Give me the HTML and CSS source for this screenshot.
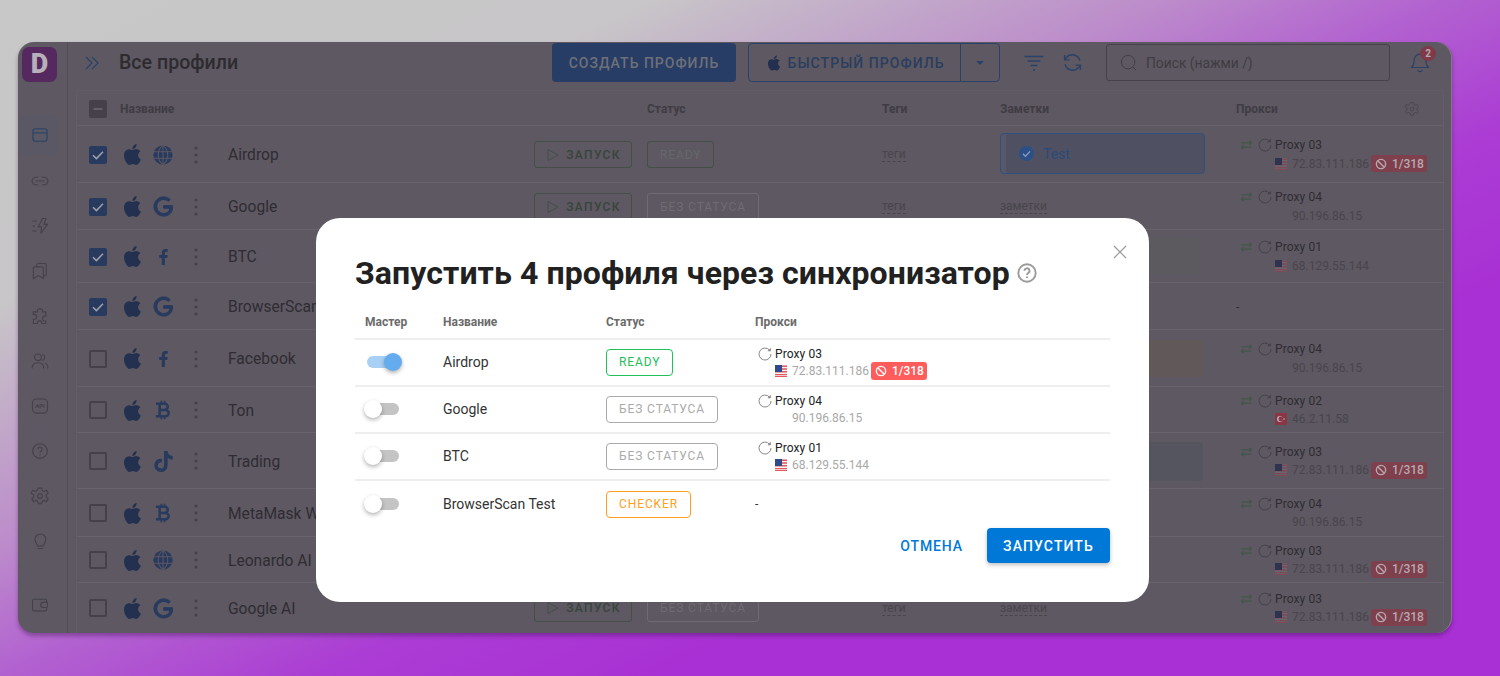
FILE: index.html
```html
<!DOCTYPE html>
<html lang="ru">
<head>
<meta charset="utf-8">
<title>Все профили</title>
<link rel="stylesheet" href="styles.css">
</head>
<body>
<svg class="defs" aria-hidden="true">
  <symbol id="apple" viewBox="0 0 24 24"><path d="M18.71,19.5C17.88,20.74 17,21.95 15.66,21.97C14.32,22 13.89,21.18 12.37,21.18C10.84,21.18 10.37,21.95 9.1,22C7.79,22.05 6.8,20.68 5.96,19.47C4.25,17 2.94,12.45 4.7,9.39C5.57,7.87 7.13,6.91 8.82,6.88C10.1,6.86 11.32,7.75 12.11,7.75C12.89,7.75 14.37,6.68 15.92,6.84C16.57,6.87 18.39,7.1 19.56,8.82C19.47,8.88 17.39,10.1 17.41,12.63C17.44,15.65 20.06,16.66 20.09,16.67C20.06,16.74 19.67,18.11 18.71,19.5M13,3.5C13.73,2.67 14.94,2.04 15.94,2C16.07,3.17 15.6,4.35 14.9,5.19C14.21,6.04 13.07,6.7 11.95,6.61C11.8,5.46 12.36,4.26 13,3.5Z"/></symbol>
  <symbol id="google" viewBox="0 0 24 24"><path d="M21.35,11.1H12.18V13.83H18.69C18.36,17.64 15.19,19.27 12.19,19.27C8.36,19.27 5,16.25 5,12C5,7.9 8.2,4.73 12.2,4.73C15.29,4.73 17.1,6.7 17.1,6.7L19,4.72C19,4.72 16.56,2 12.1,2C6.42,2 2.03,6.8 2.03,12C2.03,17.05 6.16,22 12.25,22C17.6,22 21.5,18.33 21.5,12.91C21.5,11.76 21.35,11.1 21.35,11.1V11.1Z" stroke="currentColor" stroke-width="1"/></symbol>
  <symbol id="globe" viewBox="0 0 24 24"><circle cx="12" cy="12" r="10.5"/><g fill="none" stroke="#5d5861" stroke-width="1.1"><path d="M1.5 8.5h21M1.5 15.5h21M12 1.5v21"/><path d="M12 1.5c-7 5-7 16 0 21M12 1.5c7 5 7 16 0 21"/></g></symbol>
  <symbol id="fb" viewBox="0 0 320 512"><path d="M279.14 288l14.22-92.66h-88.91v-60.13c0-25.35 12.42-50.06 52.24-50.06h40.42V6.26S260.43 0 225.36 0c-73.22 0-121.08 44.38-121.08 124.72v70.62H22.89V288h81.39v224h100.17V288z"/></symbol>
  <symbol id="btc" viewBox="0 0 24 24"><g fill="none" stroke="currentColor"><path stroke-width="3" d="M8 4.5h6a3.6 3.6 0 0 1 0 7.4H8h7a3.8 3.8 0 0 1 0 7.6H8zM3.5 4.5H9M3.5 19.500H9"/><path stroke-width="2" d="M10 1v3M14 1v3M10 20v3M14 20v3"/></g></symbol>
  <symbol id="tiktok" viewBox="0 0 448 512"><path d="M448,209.91a210.06,210.06,0,0,1-122.77-39.25V349.38A162.55,162.55,0,1,1,185,188.31V278.2a74.62,74.62,0,1,0,52.23,71.18V0l88,0a121.18,121.18,0,0,0,1.86,22.17h0A122.18,122.18,0,0,0,381,102.39a121.43,121.43,0,0,0,67,20.14Z"/></symbol>
  <symbol id="dots" viewBox="0 0 4 18"><circle cx="2" cy="2" r="1.6"/><circle cx="2" cy="9" r="1.6"/><circle cx="2" cy="16" r="1.6"/></symbol>
  <symbol id="check" viewBox="0 0 18 18"><rect width="18" height="18" rx="2" fill="#283a5e"/><path d="M4 9.2l3.4 3.3L14 5.8" fill="none" stroke="#9da0a8" stroke-width="1.6"/></symbol>
  <symbol id="play" viewBox="0 0 16 16"><path d="M3 2.5l10 5.500-10 5.500z" fill="none" stroke="currentColor" stroke-width="1"/></symbol>
  <symbol id="swap" viewBox="0 0 14 12"><g fill="none" stroke="currentColor" stroke-width="1.500"><path d="M.5 3.2h13M10.5.6l3 2.600-3 2.600"/><path d="M.5 8.800h13M3.500 6.200l-3 2.600 3 2.600"/></g></symbol>
  <symbol id="reload" viewBox="0 0 14 14"><g fill="none" stroke="currentColor" stroke-width="1"><path d="M11.6 3.2A6 6 0 1 0 13 7"/></g><path d="M12.8.8v3.4H9.4z" fill="currentColor"/></symbol>
  <symbol id="us" viewBox="0 0 12 12"><rect width="12" height="12" fill="#f3f3f3"/><path d="M0 .5h12v1.4H0zM0 3.3h12v1.4H0zM0 6.1h12v1.4H0zM0 8.9h12v1.4H0z" fill="#e4575d"/><path d="M0 11h12v1H0z" fill="#e4575d"/><rect width="7" height="7" fill="#2f4a8a"/></symbol>
  <symbol id="usdim" viewBox="0 0 12 12"><rect width="12" height="12" fill="#6a6570"/><path d="M0 .5h12v1.4H0zM0 3.3h12v1.4H0zM0 6.1h12v1.4H0zM0 8.9h12v1.4H0zM0 11h12v1H0z" fill="#7c4a54"/><rect width="7" height="7" fill="#2f3350"/></symbol>
  <symbol id="tr" viewBox="0 0 12 12"><rect width="12" height="12" fill="#8a3644"/><circle cx="5" cy="6" r="3" fill="#b9b3bb"/><circle cx="5.9" cy="6" r="2.4" fill="#8a3644"/><circle cx="9" cy="6" r=".8" fill="#b9b3bb"/></symbol>
  <symbol id="ban" viewBox="0 0 14 14"><g fill="none" stroke="currentColor" stroke-width="1.6"><circle cx="7" cy="7" r="5.4"/><path d="M3.2 3.2l7.6 7.6"/></g></symbol>
</svg>

<div class="window">
  <aside class="sidebar">
    <div class="logo"><span class="logo-d">D</span></div>
    <nav class="nav">
      <span class="nav-item nav-item--active"><svg viewBox="0 0 24 24"><rect x="3.5" y="4.5" width="17" height="15" rx="3"/><path d="M3.5 9.5h17"/></svg></span>
      <span class="nav-item"><svg viewBox="0 0 24 24"><path d="M9.5 7.5H7a4.5 4.5 0 0 0 0 9h2.5M14.5 7.5H17a4.5 4.5 0 0 1 0 9h-2.5M7 12h10"/></svg></span>
      <span class="nav-item"><svg viewBox="0 0 24 24"><path d="M3 6h5M3 12h3M3 18h5M15 3l-5 10h4l-1 8 8-11h-4l2-7z"/></svg></span>
      <span class="nav-item"><svg viewBox="0 0 24 24"><path d="M8 7V5a2 2 0 0 1 2-2h8a1.5 1.5 0 0 1 1.5 1.5V16a2 2 0 0 1-2 2H16M6 7h8a2 2 0 0 1 2 2v12l-6-3.500L4 21V9a2 2 0 0 1 2-2z"/></svg></span>
      <span class="nav-item"><svg viewBox="0 0 24 24"><path d="M9 6a3 3 0 0 1 6 0v1h4v5h-1a3 3 0 0 0 0 6h1v3h-5v-1a2.500 2.500 0 0 0-5 0v1H4v-5h1a3 3 0 0 0 0-6H4V7h5z"/></svg></span>
      <span class="nav-item"><svg viewBox="0 0 24 24"><circle cx="9.500" cy="7.500" r="4"/><path d="M2.500 21c0-4.500 3-7 7-7s7 2.500 7 7M15 3.800a4 4 0 0 1 0 7.500M18 14.500c2.200 1 3.500 3.200 3.500 6.500"/></svg></span>
      <span class="nav-item"><svg viewBox="0 0 24 24"><rect x="3" y="3.500" width="18" height="17" rx="4.500"/><text x="12" y="14.500" class="api-text">API</text></svg></span>
      <span class="nav-item"><svg viewBox="0 0 24 24"><circle cx="12" cy="12" r="8.800"/><path d="M9.500 9.800a2.500 2.500 0 1 1 3.800 2.200c-.9.500-1.300 1-1.300 2M12 16v1"/></svg></span>
      <span class="nav-item"><svg viewBox="0 0 24 24"><path d="M10 2.500h4l.8 3 2.200 1 2.800-1.400 2 3.400-2.300 2.100v2.600l2.300 2.100-2 3.400-2.800-1.400-2.200 1-.8 3h-4l-.8-3-2.200-1-2.800 1.400-2-3.400 2.300-2.100v-2.600L1.200 8.500l2-3.400L6 6.500l2.200-1z"/><circle cx="12" cy="12" r="2.800"/></svg></span>
      <span class="nav-item"><svg viewBox="0 0 24 24"><path d="M9 18c0-2-3-3.500-3-8a6.500 6.500 0 0 1 13 0c0 4.500-3 6-3 8zM9.500 21h6"/></svg></span>
    </nav>
    <span class="nav-item nav-item--bottom"><svg viewBox="0 0 24 24"><path d="M20 8V6.500A1.500 1.500 0 0 0 18.500 5H5a2 2 0 0 0-2 2v10a2 2 0 0 0 2 2h13.500a1.500 1.500 0 0 0 1.500-1.500V16M16 8.500h3.500a1.500 1.500 0 0 1 1.500 1.500v3.500a1.500 1.500 0 0 1-1.500 1.500H16a3.200 3.200 0 0 1 0-6.500z"/></svg></span>
  </aside>

  <main class="main">
    <header class="topbar">
      <svg class="expand" viewBox="0 0 16 16"><path d="M2 2l6 6-6 6M8 2l6 6-6 6"/></svg>
      <h1 class="page-title">Все профили</h1>
      <button class="btn-create">СОЗДАТЬ ПРОФИЛЬ</button>
      <div class="btn-quick">
        <span class="btn-quick-main"><svg class="ico-apple-sm"><use href="#apple"/></svg>БЫСТРЫЙ ПРОФИЛЬ</span>
        <span class="btn-quick-arrow"></span>
      </div>
      <svg class="tool-filter" viewBox="0 0 20 16"><path d="M.5 1.500h19M3.500 6h13M6.500 10.500h7M9 15h2"/></svg>
      <svg class="tool-refresh" viewBox="0 0 24 24"><path d="M20.500 10A9 9 0 0 0 4.800 6.500L3 9M3.500 14a9 9 0 0 0 15.700 3.500L21 15M3 3.500V9h5.500M21 20.500V15h-5.500"/></svg>
      <label class="search">
        <svg viewBox="0 0 20 20"><circle cx="9" cy="9" r="7.500"/><path d="M14.500 14.500l3.500 3.500"/></svg>
        <span>Поиск (нажми /)</span>
      </label>
      <span class="bell">
        <svg viewBox="0 0 24 24"><path d="M12 2.500a7 7 0 0 0-7 7c0 5-1.500 7.500-3 9h20c-1.500-1.500-3-4-3-9a7 7 0 0 0-7-7zM9 21.500a3.200 3.200 0 0 0 6 0"/></svg>
        <b class="bell-badge">2</b>
      </span>
    </header>

    <section class="table">
      <div class="row row--head">
        <span class="head-check"><svg class="minus" viewBox="0 0 18 18"><rect width="18" height="18" rx="2"/><path d="M4.500 9h9"/></svg></span>
        <span class="head-name">Название</span>
        <span class="c-status">Статус</span>
        <span>Теги</span>
        <span>Заметки</span>
        <span class="head-proxy">Прокси<svg class="head-gear" viewBox="0 0 24 24"><path d="M10 2.500h4l.8 3 2.200 1 2.800-1.400 2 3.400-2.300 2.100v2.600l2.300 2.100-2 3.400-2.800-1.400-2.200 1-.8 3h-4l-.8-3-2.200-1-2.800 1.400-2-3.400 2.300-2.100v-2.600L1.200 8.500l2-3.400L6 6.500l2.200-1z"/><circle cx="12" cy="12" r="2.800"/></svg></span>
      </div>
      <div class="tbody">
        <div class="row">
          <svg class="cb"><use href="#check"/></svg><svg class="os-apple"><use href="#apple"/></svg><span class="os-cell"><svg class="os-ico"><use href="#globe"/></svg></span><span class="dots-cell"><svg class="dots"><use href="#dots"/></svg></span>
          <span class="name">Airdrop</span>
          <span class="run"><svg><use href="#play"/></svg>ЗАПУСК</span>
          <span class="c-status"><span class="chip chip--ready">READY</span></span>
          <span class="tag">теги</span>
          <span class="note note--blue"><svg viewBox="0 0 24 24"><circle cx="12" cy="12" r="10.500" fill="#2b5088"/><path d="M7 12.500l3.500 3.500L17 9" fill="none" stroke="#8b9ab4" stroke-width="2"/></svg>Test</span>
          <span class="proxy"><svg class="swap"><use href="#swap"/></svg><svg class="reload"><use href="#reload"/></svg><span class="proxy-name">Proxy 03</span><span class="proxy-ip"><svg class="flag"><use href="#usdim"/></svg><i>72.83.111.186</i><b class="ban"><svg><use href="#ban"/></svg>1/318</b></span></span>
        </div>
        <div class="row">
          <svg class="cb"><use href="#check"/></svg><svg class="os-apple"><use href="#apple"/></svg><span class="os-cell"><svg class="os-ico os-ico--g"><use href="#google"/></svg></span><span class="dots-cell"><svg class="dots"><use href="#dots"/></svg></span>
          <span class="name">Google</span>
          <span class="run"><svg><use href="#play"/></svg>ЗАПУСК</span>
          <span class="c-status"><span class="chip">БЕЗ СТАТУСА</span></span>
          <span class="tag">теги</span>
          <span class="tag">заметки</span>
          <span class="proxy"><svg class="swap"><use href="#swap"/></svg><svg class="reload"><use href="#reload"/></svg><span class="proxy-name">Proxy 04</span><span class="proxy-ip proxy-ip--noflag"><i>90.196.86.15</i></span></span>
        </div>
        <div class="row">
          <svg class="cb"><use href="#check"/></svg><svg class="os-apple"><use href="#apple"/></svg><span class="os-cell"><svg class="os-ico os-ico--f"><use href="#fb"/></svg></span><span class="dots-cell"><svg class="dots"><use href="#dots"/></svg></span>
          <span class="name">BTC</span>
          <span class="run"></span>
          <span class="c-status"></span>
          <span></span>
          <span class="note note--gray"></span>
          <span class="proxy"><svg class="swap"><use href="#swap"/></svg><svg class="reload"><use href="#reload"/></svg><span class="proxy-name">Proxy 01</span><span class="proxy-ip"><svg class="flag"><use href="#usdim"/></svg><i>68.129.55.144</i></span></span>
        </div>
        <div class="row">
          <svg class="cb"><use href="#check"/></svg><svg class="os-apple"><use href="#apple"/></svg><span class="os-cell"><svg class="os-ico os-ico--g"><use href="#google"/></svg></span><span class="dots-cell"><svg class="dots"><use href="#dots"/></svg></span>
          <span class="name">BrowserScan Test</span>
          <span class="run"></span>
          <span class="c-status"></span>
          <span></span>
          <span></span>
          <span class="proxy-none">-</span>
        </div>
        <div class="row">
          <span class="cb cb--off"></span><svg class="os-apple"><use href="#apple"/></svg><span class="os-cell"><svg class="os-ico os-ico--f"><use href="#fb"/></svg></span><span class="dots-cell"><svg class="dots"><use href="#dots"/></svg></span>
          <span class="name">Facebook</span>
          <span class="run"></span>
          <span class="c-status"></span>
          <span></span>
          <span class="note note--red"></span>
          <span class="proxy"><svg class="swap"><use href="#swap"/></svg><svg class="reload"><use href="#reload"/></svg><span class="proxy-name">Proxy 04</span><span class="proxy-ip proxy-ip--noflag"><i>90.196.86.15</i></span></span>
        </div>
        <div class="row">
          <span class="cb cb--off"></span><svg class="os-apple"><use href="#apple"/></svg><span class="os-cell"><svg class="os-ico os-ico--b"><use href="#btc"/></svg></span><span class="dots-cell"><svg class="dots"><use href="#dots"/></svg></span>
          <span class="name">Ton</span>
          <span class="run"></span>
          <span class="c-status"></span>
          <span></span>
          <span></span>
          <span class="proxy"><svg class="swap"><use href="#swap"/></svg><svg class="reload"><use href="#reload"/></svg><span class="proxy-name">Proxy 02</span><span class="proxy-ip"><svg class="flag"><use href="#tr"/></svg><i>46.2.11.58</i></span></span>
        </div>
        <div class="row">
          <span class="cb cb--off"></span><svg class="os-apple"><use href="#apple"/></svg><span class="os-cell"><svg class="os-ico os-ico--t"><use href="#tiktok"/></svg></span><span class="dots-cell"><svg class="dots"><use href="#dots"/></svg></span>
          <span class="name">Trading</span>
          <span class="run"></span>
          <span class="c-status"></span>
          <span></span>
          <span class="note note--steel"></span>
          <span class="proxy"><svg class="swap"><use href="#swap"/></svg><svg class="reload"><use href="#reload"/></svg><span class="proxy-name">Proxy 03</span><span class="proxy-ip"><svg class="flag"><use href="#usdim"/></svg><i>72.83.111.186</i><b class="ban"><svg><use href="#ban"/></svg>1/318</b></span></span>
        </div>
        <div class="row">
          <span class="cb cb--off"></span><svg class="os-apple"><use href="#apple"/></svg><span class="os-cell"><svg class="os-ico os-ico--b"><use href="#btc"/></svg></span><span class="dots-cell"><svg class="dots"><use href="#dots"/></svg></span>
          <span class="name">MetaMask Wallet</span>
          <span class="run"></span>
          <span class="c-status"></span>
          <span></span>
          <span></span>
          <span class="proxy"><svg class="swap"><use href="#swap"/></svg><svg class="reload"><use href="#reload"/></svg><span class="proxy-name">Proxy 04</span><span class="proxy-ip proxy-ip--noflag"><i>90.196.86.15</i></span></span>
        </div>
        <div class="row">
          <span class="cb cb--off"></span><svg class="os-apple"><use href="#apple"/></svg><span class="os-cell"><svg class="os-ico"><use href="#globe"/></svg></span><span class="dots-cell"><svg class="dots"><use href="#dots"/></svg></span>
          <span class="name">Leonardo AI</span>
          <span class="run"></span>
          <span class="c-status"></span>
          <span></span>
          <span></span>
          <span class="proxy"><svg class="swap"><use href="#swap"/></svg><svg class="reload"><use href="#reload"/></svg><span class="proxy-name">Proxy 03</span><span class="proxy-ip"><svg class="flag"><use href="#usdim"/></svg><i>72.83.111.186</i><b class="ban"><svg><use href="#ban"/></svg>1/318</b></span></span>
        </div>
        <div class="row">
          <span class="cb cb--off"></span><svg class="os-apple"><use href="#apple"/></svg><span class="os-cell"><svg class="os-ico os-ico--g"><use href="#google"/></svg></span><span class="dots-cell"><svg class="dots"><use href="#dots"/></svg></span>
          <span class="name">Google AI</span>
          <span class="run"><svg><use href="#play"/></svg>ЗАПУСК</span>
          <span class="c-status"><span class="chip">БЕЗ СТАТУСА</span></span>
          <span class="tag">теги</span>
          <span class="tag">заметки</span>
          <span class="proxy"><svg class="swap"><use href="#swap"/></svg><svg class="reload"><use href="#reload"/></svg><span class="proxy-name">Proxy 03</span><span class="proxy-ip"><svg class="flag"><use href="#usdim"/></svg><i>72.83.111.186</i><b class="ban"><svg><use href="#ban"/></svg>1/318</b></span></span>
        </div>
      </div>
    </section>
  </main>

  <div class="modal">
    <svg class="modal-close" viewBox="0 0 14 14"><path d="M1 1l12 12M13 1L1 13"/></svg>
    <h2 class="modal-title">Запустить 4 профиля через синхронизатор<svg class="modal-help" viewBox="0 0 20 20"><circle cx="10" cy="10" r="8.700"/><path d="M7.500 7.800a2.500 2.500 0 1 1 3.700 2.200c-.8.500-1.200 1-1.200 2M10 13.500v1.500"/></svg></h2>
    <div class="m-row m-row--head">
      <span class="m-master">Мастер</span><span>Название</span><span>Статус</span><span>Прокси</span>
    </div>
    <div class="m-row">
      <span class="m-toggle m-toggle--on"><i></i></span>
      <span>Airdrop</span>
      <span><span class="m-chip m-chip--ready">READY</span></span>
      <span class="m-proxy"><svg class="m-reload"><use href="#reload"/></svg><span class="m-proxy-name">Proxy 03</span><span class="m-proxy-ip"><svg class="m-flag"><use href="#us"/></svg><i>72.83.111.186</i><b class="m-ban"><svg><use href="#ban"/></svg>1/318</b></span></span>
    </div>
    <div class="m-row">
      <span class="m-toggle"><i></i></span>
      <span>Google</span>
      <span><span class="m-chip">БЕЗ СТАТУСА</span></span>
      <span class="m-proxy"><svg class="m-reload"><use href="#reload"/></svg><span class="m-proxy-name">Proxy 04</span><span class="m-proxy-ip m-proxy-ip--noflag"><i>90.196.86.15</i></span></span>
    </div>
    <div class="m-row">
      <span class="m-toggle"><i></i></span>
      <span>BTC</span>
      <span><span class="m-chip">БЕЗ СТАТУСА</span></span>
      <span class="m-proxy"><svg class="m-reload"><use href="#reload"/></svg><span class="m-proxy-name">Proxy 01</span><span class="m-proxy-ip"><svg class="m-flag"><use href="#us"/></svg><i>68.129.55.144</i></span></span>
    </div>
    <div class="m-row m-row--last">
      <span class="m-toggle"><i></i></span>
      <span>BrowserScan Test</span>
      <span><span class="m-chip m-chip--checker">CHECKER</span></span>
      <span class="m-none">-</span>
    </div>
    <footer class="m-actions">
      <button class="m-cancel">ОТМЕНА</button>
      <button class="m-start">ЗАПУСТИТЬ</button>
    </footer>
  </div>
</div>
</body>
</html>
```

FILE: styles.css
```css
* { box-sizing: border-box; }
html, body { margin: 0; height: 100%; }
body {
  height: 676px;
  overflow: hidden;
  padding: 42px 48px 43px 18px;
  font-family: Roboto, "Noto Sans", sans-serif;
  background: linear-gradient(155deg, #c8c8c8 0%, #c8c6c8 22%, #bc8acb 40%, #b262d0 49%, #ab3cd4 60%, #a930d4 72%);
}
.defs { position: absolute; width: 0; height: 0; }
button { font-family: inherit; border: 0; padding: 0; }

.window {
  position: relative;
  display: flex;
  height: 591px;
  background: #5d5861;
  border-radius: 16px;
  box-shadow: inset -1px 0 0 #7f7a83, 0 3px 4px rgba(60, 20, 80, .4);
}

/* sidebar */
.sidebar {
  flex: 0 0 50px;
  display: flex;
  flex-direction: column;
  padding-left: 2px;
  border-right: 1px solid #534f57;
}
.logo {
  width: 35px; height: 35px;
  margin: 5px 0 0 2px;
  border-radius: 7px;
  background: #55285f;
  display: flex; align-items: center; justify-content: center;
}
.logo-d { font-weight: 900; font-size: 27px; line-height: 1; color: #b7b0ba; }
.nav { display: flex; flex-direction: column; margin-top: 33px; }
.nav-item {
  width: 39px; height: 45px;
  display: flex; align-items: center; justify-content: center;
}
.nav-item svg { width: 20px; height: 20px; fill: none; stroke: #454149; stroke-width: 1.3; }
.nav-item--active { height: 40px; margin-bottom: 3px; background: #595864; border-radius: 4px; }
.nav-item--active svg { stroke: #2a4268; }
.nav-item--bottom { margin-top: auto; margin-bottom: 6px; }
.api-text { font: 700 7px Roboto, sans-serif; fill: #454149; stroke: none; text-anchor: middle; }

/* main */
.main { flex: 1; min-width: 0; display: flex; flex-direction: column; }
.topbar { display: flex; align-items: center; height: 41px; margin-bottom: 7px; position: relative; }
.expand { width: 16px; height: 16px; margin-left: 16px; fill: none; stroke: #2a4268; stroke-width: 1.2; flex: none; }
.page-title { margin: 0 0 0 19px; width: 433px; font-size: 19.6px; font-weight: 500; line-height: 24px; color: #2e2b30; flex: none; }
.btn-create {
  width: 184px; height: 39px; flex: none;
  background: #283d66; border-radius: 4px;
  color: #6e7078; font-size: 14px; font-weight: 500; letter-spacing: 1px;
}
.btn-quick {
  display: flex; width: 252px; height: 39px; margin-left: 12px; flex: none;
  border: 1px solid #2a4268; border-radius: 4px;
}
.btn-quick-main {
  width: 212px; border-right: 1px solid #2a4268;
  display: flex; align-items: center; justify-content: center; gap: 5px;
  color: #2a3e60; font-size: 14px; font-weight: 500; letter-spacing: 1.05px;
}
.ico-apple-sm { width: 18px; height: 18px; fill: #24304f; }
.btn-quick-arrow { flex: 1; position: relative; display: flex; align-items: center; justify-content: center; }
.btn-quick-arrow::after {
  content: ""; border: 4px solid transparent; border-top: 4px solid #2a4268; border-bottom: 0;
  width: 0; height: 0;
}
.tool-filter { width: 20px; height: 16px; margin-left: 24px; fill: none; stroke: #2a4268; stroke-width: 1.3; flex: none; }
.tool-refresh { width: 21px; height: 21px; margin-left: 18px; fill: none; stroke: #2a4268; stroke-width: 1.6; flex: none; }
.search {
  display: flex; align-items: center; gap: 8px;
  width: 284px; height: 37px; margin-left: 23px; padding-left: 13px; flex: none;
  border: 1px solid #46424a; border-radius: 3px;
  color: #403c44; font-size: 13.8px;
}
.search svg { width: 18px; height: 18px; fill: none; stroke: #413d45; stroke-width: 1.100; }
.bell { position: relative; width: 20px; height: 22px; margin: -2px 0 0 20px; flex: none; }
.bell svg { width: 20px; height: 22px; fill: none; stroke: #2a4268; stroke-width: 1.3; }
.bell-badge {
  position: absolute; left: 10px; top: -5px;
  width: 16px; height: 15px; border-radius: 50%;
  background: #7e3a48; color: #b8a9b0; font-size: 10px; font-weight: 700;
  display: flex; align-items: center; justify-content: center;
}

/* table */
.table {
  margin-left: 8px; width: 1368px; height: 543px;
  border: 1px solid #625d66; border-bottom: 0; border-radius: 4px 4px 0 0;
  display: flex; flex-direction: column;
}
.row {
  display: grid;
  grid-template-columns: 43px 27px 32px 34px 321px 113px 235px 118px 236px 208px;
  align-items: center;
  border-bottom: 1px solid #67626b;
  color: #2f2c33;
}
.row--head {
  height: 35px;
  padding-top: 1px;
  font-size: 12px; font-weight: 700; color: #403c44;
  grid-template-columns: 43px 527px 235px 118px 236px 208px;
}
.head-check { padding-left: 12px; display: flex; }
.minus { width: 18px; height: 18px; fill: #45404a; stroke: #6f6a73; stroke-width: 0; }
.minus path { stroke-width: 1.5; fill: none; }
.head-name { display: block; }
.head-proxy { display: flex; justify-content: space-between; align-items: center; padding-right: 24px; }
.head-gear { width: 16px; height: 16px; fill: none; stroke: #47434b; stroke-width: 1.2; }
.tbody {
  flex: 1;
  display: grid;
  grid-template-rows: 57px 47px 53px 47px 57px 46px 56px 48px 46px 49px;
}
.tbody .row { padding-top: 1px; }
.tbody .row:last-child { border-bottom: 0; }
.cb { width: 18px; height: 18px; margin-left: 12px; }
.cb--off { border: 2px solid #45414a; border-radius: 2px; }
.os-apple { width: 25px; height: 25px; fill: #24304f; }
.os-cell { display: flex; justify-content: center; }
.os-ico { width: 22px; height: 22px; fill: #283a5e; }
.os-ico--g { width: 23px; height: 23px; color: #283a5e; }
.os-ico--f { width: 11px; height: 16px; }
.os-ico--b { width: 20px; height: 22px; color: #283a5e; }
.os-ico--t { width: 19px; height: 21px; }
.dots-cell { display: flex; justify-content: center; }
.dots { width: 4px; height: 18px; fill: #45414a; }
.name { padding: 1px 0 0 15px; font-size: 15.6px; white-space: nowrap; }
.run {
  display: flex; align-items: center; justify-content: center; gap: 5px;
  width: 98px; height: 27px;
  border: 1px solid #444f48; border-radius: 3px;
  color: #38453d; font-size: 12px; font-weight: 500; letter-spacing: 1.3px;
}
.run:empty { border: 0; }
.run svg { width: 16px; height: 16px; color: #444f48; }
.c-status { display: block; }
.chip {
  display: inline-flex; align-items: center;
  height: 27px; padding: 0 12px;
  border: 1px solid #6f6b73; border-radius: 3px;
  color: #6f6b72; font-size: 12px; letter-spacing: .9px;
}
.chip--ready { border-color: #444f48; color: #65686a; }
.tag {
  justify-self: start;
  font-size: 12px; line-height: 14px; color: #49454d;
  border-bottom: 1px dashed #49454d;
}
.note { border-radius: 4px; height: 37px; width: 200px; display: flex; align-items: center; gap: 8px; }
.note--blue {
  width: 205px; height: 41px; margin-top: -2px; padding-left: 17px;
  background: #4f5163; border: 1px solid #30507e;
  color: #2b4a78; font-size: 14px;
  box-shadow: inset 5px 0 0 #57586a;
}
.note--blue svg { width: 17px; height: 17px; }
.note--gray { width: 199px; background: #5c5a5e; }
.note--red { width: 203px; height: 37px; background: #615859; }
.note--steel { width: 203px; height: 39px; background: #54555f; }
.proxy {
  display: grid;
  grid-template-columns: 23px 16px 1fr;
  align-items: center;
  font-size: 12px;
}
.swap { width: 11px; height: 10px; color: #43564b; justify-self: start; margin-left: 5px; }
.reload { width: 14px; height: 14px; margin-left: -1px; color: #45414a; }
.proxy-name { line-height: 18px; color: #2f2c33; letter-spacing: .1px; }
.proxy-ip {
  grid-column: 3; display: flex; align-items: center; gap: 5px;
  line-height: 18px; height: 19px;
}
.proxy-ip--noflag { padding-left: 17px; }
.proxy-ip i { font-style: normal; color: #49454d; }
.flag { width: 12px; height: 12px; flex: none; }
.ban {
  display: flex; align-items: center; gap: 5px;
  height: 17px; width: 56px; padding: 0 3px 0 4px; margin-left: -3px;
  background: #7e404c; border-radius: 3px;
  color: #b8a9b0; font-size: 12px; font-weight: 500;
}
.ban svg { width: 12px; height: 12px; }
.proxy-none { font-size: 12px; }

/* modal */
.modal {
  position: absolute;
  left: 298px; top: 176px;
  width: 833px; height: 384px;
  padding: 35px 39px 0;
  background: #fff;
  border-radius: 24px;
  color: #212121;
}
.modal-close { position: absolute; right: 22px; top: 27px; width: 14px; height: 14px; fill: none; stroke: #9a9a9a; stroke-width: 1.2; }
.modal-title {
  display: flex; align-items: center;
  margin: 0 0 10px;
  font-size: 32px; font-weight: 700; line-height: 40px; letter-spacing: .08px;
  white-space: nowrap;
}
.modal-help { width: 20px; height: 20px; margin-left: 7px; fill: none; stroke: #9a9a9a; stroke-width: 1.9; }
.m-row {
  display: grid;
  grid-template-columns: 88px 163px 149px 1fr;
  align-items: center;
  height: 47px;
  padding-bottom: 1px;
  border-bottom: 2px solid #eee;
  font-size: 14px; color: #333;
}
.m-row--head { height: 37px; font-size: 12px; font-weight: 700; color: #6b6b6b; padding: 2px 0 0; }
.m-row--last { border-bottom: 0; }
.m-master { padding-left: 10px; }
.m-toggle {
  position: relative; display: block;
  width: 32px; height: 12px; margin-left: 12px;
  border-radius: 6px; background: #c4c4c4;
}
.m-toggle i {
  position: absolute; left: -3px; top: -3px;
  width: 18px; height: 18px; border-radius: 50%;
  background: #fff;
  box-shadow: 0 2px 4px rgba(0, 0, 0, .3);
}
.m-toggle--on { background: #a8d0f5; }
.m-toggle--on i { left: 17px; background: #64aced; }
.m-chip {
  display: inline-flex; align-items: center;
  height: 27px; padding: 0 12px;
  border: 1px solid #aaa; border-radius: 4px;
  color: #aaa; font-size: 12px; letter-spacing: .9px;
}
.m-chip--ready { border-color: #22c05a; color: #22c05a; }
.m-chip--checker { border-color: #ff9f1c; color: #ff9f1c; }
.m-proxy {
  display: grid;
  grid-template-columns: 16px 1fr;
  align-items: center;
  margin-top: 2px;
  padding-left: 4px;
  font-size: 12px;
}
.m-reload { width: 14px; height: 14px; margin-left: -1px; color: #888; }
.m-proxy-name { line-height: 16px; color: #212121; letter-spacing: .1px; }
.m-proxy-ip { grid-column: 2; display: flex; align-items: center; gap: 5px; height: 18px; }
.m-proxy-ip--noflag { padding-left: 17px; }
.m-proxy-ip i { font-style: normal; color: #a8a8a8; }
.m-flag { width: 12px; height: 12px; flex: none; }
.m-ban {
  display: flex; align-items: center; gap: 5px;
  height: 17.500px; width: 56px; padding: 0 3px 0 4px;
  margin-left: -3px;
  background: #ff5c5c; border-radius: 3px;
  color: #fff; font-size: 12px; font-weight: 500;
}
.m-ban svg { width: 12px; height: 12px; }
.m-none { font-size: 12px; }
.m-actions { display: flex; justify-content: flex-end; align-items: center; gap: 24px; }
.m-cancel { background: none; color: #0078d8; font-size: 14px; font-weight: 500; letter-spacing: .9px; }
.m-start {
  width: 123px; height: 35px;
  background: #0078d8; color: #fff;
  border-radius: 4px;
  font-size: 14px; font-weight: 500; letter-spacing: 1.1px;
  box-shadow: 0 2px 4px rgba(0, 0, 0, .25);
}
```
